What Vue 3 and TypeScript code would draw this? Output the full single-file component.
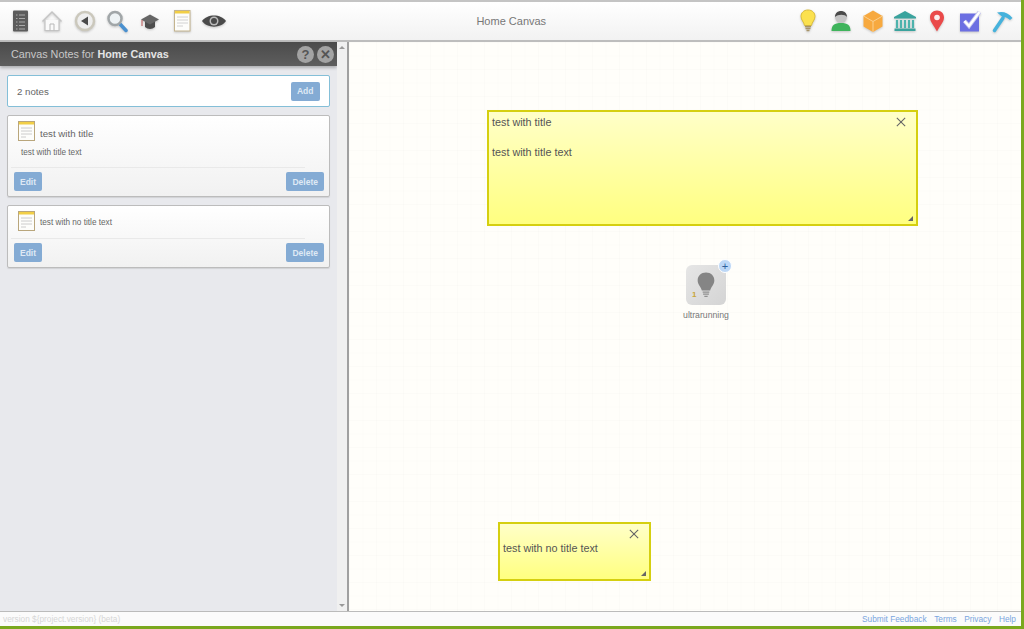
<template>
  <div class="app-shell">
    <header class="topbar">
      <div class="tool-group">
        <svg class="tool" viewBox="0 0 24 24"><rect x="5" y="1.500" width="15" height="21" rx="1" fill="#5c5c5c" /><path d="M8 6h1.500M11 6h6M8 9.500h1.500M11 9.500h6M8 13h1.500M11 13h6M8 16.500h1.500M11 16.500h6M8 20h1.500M11 20h6" stroke="#a8a8a8" stroke-width="1" /></svg>
        <svg class="tool" viewBox="0 0 24 24"><path d="M2.500 12.500 12 3l9.500 9.500" fill="none" stroke="#c4c4c4" stroke-width="1.500" /><path d="M5 11v10.500h14V11" fill="#fafafa" stroke="#c4c4c4" stroke-width="1.200" /><path d="M10 21.500V15h4v6.500" fill="none" stroke="#b8b8b8" /></svg>
        <svg class="tool" viewBox="0 0 24 24"><circle cx="12" cy="12" r="9" fill="#eee" stroke="#cbc8bc" stroke-width="2.500" /><path d="M15 7.500v9L8 12z" fill="#4a4a4a" /></svg>
        <svg class="tool" viewBox="0 0 24 24"><path d="m15 15 6 6.500" stroke="#4a90cf" stroke-width="3.500" stroke-linecap="round" /><circle cx="10" cy="9.500" r="6.500" fill="#eef3f5" stroke="#a1a6a8" stroke-width="2.500" /></svg>
        <svg class="tool" viewBox="0 0 24 24"><path d="M7 12v6c3 2.500 7 2.500 10 0v-6z" fill="#4d4d4d" /><path d="m3 10.500 9-5 9 5-9 5z" fill="#666" /><path d="M4 11v6" stroke="#b55" stroke-width="1" /></svg>
        <svg class="tool" viewBox="0 0 24 24"><rect x="4.500" y="1.500" width="15.500" height="20.500" fill="#fdfdfb" stroke="#c4b48e" /><rect x="5" y="2" width="14.500" height="2.500" fill="#f2cf46" /><path d="M7 8h11M7 11h11M7 14h11M7 17h6" stroke="#d2d2d2" /></svg>
        <svg class="tool" viewBox="0 0 24 24"><path d="M0 12c5-7.500 19-7.500 24 0-5 7.500-19 7.500-24 0z" fill="#4a4a4a" /><circle cx="12" cy="12" r="4.500" fill="#bbb" /><circle cx="12" cy="12" r="3" fill="#4a4a4a" /></svg>
      </div>
      <div class="canvas-name">Home Canvas</div>
      <div class="tool-group tool-group-right">
        <svg class="tool" viewBox="0 0 24 24"><path d="M12 1c-4.500 0-7 3-7 6.500 0 3.500 3 5.500 3.500 9h7C16 13 19 11 19 7.500 19 4 16.500 1 12 1z" fill="#fbe14f" stroke="#d8bb3a" /><path d="M9 17.500h6M9.500 19.500h5M10.500 21.500h3" stroke="#a89468" stroke-width="1.500" /></svg>
        <svg class="tool" viewBox="0 0 24 24"><path d="M2.500 22c0-6 3-8 9.500-8s9.500 2 9.500 8z" fill="#3fb45c" /><circle cx="12" cy="8" r="6" fill="#c4c4c4" /><path d="M6 8c0-8 12-8 12 0-2-3-9-3-12 0z" fill="#4a4a4a" /></svg>
        <svg class="tool" viewBox="0 0 24 24"><path d="m12 1.500 9.500 5.500v10.500L12 23l-9.500-5.500V7z" fill="#f7a93f" /><path d="M2.500 7 12 12.500 21.500 7M12 12.500V23" fill="none" stroke="#fbd08f" stroke-width="1" /></svg>
        <svg class="tool" viewBox="0 0 24 24"><path d="M12 2 1 8v1.500h22V8z" fill="#3aa39d" /><path d="M4 11v8M8 11v8M12 11v8M16 11v8M20 11v8" stroke="#4db3ad" stroke-width="2.200" /><path d="M1.500 19.500h21V22h-21z" fill="#3aa39d" /></svg>
        <svg class="tool" viewBox="0 0 24 24"><path d="M12 1.500c-4.200 0-7 3-7 7 0 4.500 4.500 9 7 14 2.500-5 7-9.500 7-14 0-4-2.800-7-7-7z" fill="#ea4a4a" /><circle cx="12" cy="8.500" r="2.800" fill="#fbeeee" /></svg>
        <svg class="tool" viewBox="0 0 24 24"><rect x="2" y="4.500" width="19" height="18" fill="#6c6fe2" /><path d="m6.500 12 4.500 5L21.500 3" fill="none" stroke="#c6c6ee" stroke-width="4" /><path d="m6.500 12 4.500 5L21.500 3" fill="none" stroke="#fff" stroke-width="2.200" /></svg>
        <svg class="tool" viewBox="0 0 24 24"><path d="M13 9 4.500 21.500" stroke="#46b2dc" stroke-width="3.500" stroke-linecap="round" /><path d="M7 3.500c6-1.500 11 0 15.500 5.500L20 11c-2-2-4.500-3.500-7.500-3z" fill="#46b2dc" /></svg>
      </div>
    </header>

    <div class="workspace">
      <aside class="sidebar">
        <div class="sidebar-main">
          <div class="panel-head">
            <span>Canvas Notes for <b>Home Canvas</b></span>
            <div class="head-btns">
              <span class="round-btn">?</span>
              <span class="round-btn">✕</span>
            </div>
          </div>
          <div class="notes-body">
            <div class="add-box">
              <span>2 notes</span>
              <button class="btn">Add</button>
            </div>
            <div v-for="note in notes" :key="note.id" class="note-card">
              <div class="note-top">
                <svg class="note-icon" viewBox="0 0 17 20"><rect x="0.500" y="0.500" width="16" height="19" fill="#fdfdfb" stroke="#b9a67c" /><rect x="1" y="1" width="15" height="2.500" fill="#f2cf46" /><path d="M3 7h11M3 10h11M3 13h11M3 16h5" stroke="#ccc" /></svg>
                <span :class="note.text ? 'note-title' : 'note-only'">{{ note.title }}</span>
              </div>
              <div v-if="note.text" class="note-text">{{ note.text }}</div>
              <div class="note-divider" :class="{ tight: !note.text }"></div>
              <div class="note-actions">
                <button class="btn">Edit</button>
                <button class="btn">Delete</button>
              </div>
            </div>
          </div>
        </div>
        <div class="scroller">
          <span class="arrow up"></span>
          <span class="arrow down"></span>
        </div>
      </aside>

      <main class="canvas">
        <div class="sticky sticky-large">
          <svg class="sticky-close" viewBox="0 0 12 12"><path d="m1 1 10 10M11 1 1 11" stroke="#666" stroke-width="1.300" /></svg>
          <div>test with title</div>
          <div class="sticky-gap">test with title text</div>
          <span class="grip"></span>
        </div>

        <div class="node">
          <div class="node-tile">
            <svg class="bulb" viewBox="0 0 24 32"><path d="M12 1C6 1 2 5 2 10.500c0 5 4 7.500 5 12h10c1-4.500 5-7 5-12C22 5 18 1 12 1z" fill="#858585" /><path d="M8 24.500h8M8.500 27h7M10 29.500h4" stroke="#909090" stroke-width="1.500" /></svg>
            <span class="node-count">1</span>
            <span class="node-plus">+</span>
          </div>
          <div class="node-label">ultrarunning</div>
        </div>

        <div class="sticky sticky-small">
          <svg class="sticky-close" viewBox="0 0 12 12"><path d="m1 1 10 10M11 1 1 11" stroke="#666" stroke-width="1.300" /></svg>
          <div>test with no title text</div>
          <span class="grip"></span>
        </div>
      </main>
    </div>

    <footer class="footer">
      <span class="version">version ${project.version} (beta)</span>
      <nav class="links">
        <a v-for="link in links" :key="link">{{ link }}</a>
      </nav>
    </footer>
  </div>
</template>

<script setup lang="ts">
interface Note {
  id: number
  title: string
  text: string
}

const notes: Note[] = [
  { id: 1, title: 'test with title', text: 'test with title text' },
  { id: 2, title: 'test with no title text', text: '' },
]

const links = ['Submit Feedback', 'Terms', 'Privacy', 'Help']
</script>

<style>
html,
body {
  margin: 0;
  height: 100%;
  overflow: hidden;
}
</style>

<style scoped>
.app-shell {
  width: 1024px;
  height: 629px;
  box-sizing: border-box;
  display: flex;
  flex-direction: column;
  border-right: 3px solid #7aa81e;
  border-bottom: 3px solid #7aa81e;
  font-family: "Liberation Sans", Arial, sans-serif;
  color: #666;
}

.topbar {
  height: 42px;
  box-sizing: border-box;
  flex: none;
  display: flex;
  align-items: center;
  justify-content: space-between;
  padding: 0 7px 0 8px;
  background: linear-gradient(#fff, #f2f2f2);
  border-top: 2px solid #c4c4c4;
  border-bottom: 2px solid #bdbdbd;
}

.tool-group {
  display: flex;
  gap: 8.400px;
}

.tool-group-right {
  gap: 8.300px;
}

.tool {
  width: 24px;
  height: 24px;
  display: block;
  filter: drop-shadow(0 1px 1px rgba(0, 0, 0, 0.2));
}

.canvas-name {
  font-size: 11px;
  color: #777;
}

.workspace {
  flex: 1;
  min-height: 0;
  display: flex;
}

.sidebar {
  width: 349px;
  box-sizing: border-box;
  flex: none;
  display: flex;
  background: #e8e9ed;
  border-right: 2px solid #a0a0a0;
}

.sidebar-main {
  width: 337px;
  flex: none;
}

.panel-head {
  height: 24px;
  display: flex;
  align-items: center;
  justify-content: space-between;
  padding: 0 3px 0 11px;
  background: linear-gradient(#4b4b4b, #5e5e5e);
  box-shadow: 0 2px 3px rgba(0, 0, 0, 0.25);
  color: #c8c8c8;
  font-size: 10.800px;
}

.panel-head b {
  color: #e4e4e4;
}

.head-btns {
  display: flex;
  gap: 3px;
}

.round-btn {
  width: 17px;
  height: 17px;
  border-radius: 50%;
  background: #a3a3a3;
  color: #555;
  font-size: 13px;
  font-weight: bold;
  line-height: 17px;
  text-align: center;
}

.notes-body {
  display: flex;
  flex-direction: column;
  gap: 8px;
  padding: 9px 7px 0;
}

.add-box {
  height: 32px;
  box-sizing: border-box;
  display: flex;
  align-items: center;
  justify-content: space-between;
  padding: 0 9.500px 0 9px;
  background: #fff;
  border: 1.500px solid #84bfd8;
  border-radius: 2px;
  font-size: 9.700px;
  color: #666;
}

.btn {
  height: 19px;
  padding: 0 6px;
  border: 0;
  border-radius: 2px;
  background: #84abd4;
  color: #dfe9f4;
  font-family: inherit;
  font-size: 8.500px;
  font-weight: bold;
}

.note-card {
  box-sizing: border-box;
  background: linear-gradient(#fff, #f1f1f1);
  border: 1px solid #bcbcbc;
  border-radius: 2px;
  padding: 5px 5px 5px 6px;
  box-shadow: 0 1px 1px rgba(0, 0, 0, 0.1);
}

.note-top {
  display: flex;
  align-items: center;
  gap: 5px;
  padding-left: 4px;
}

.note-icon {
  width: 17px;
  height: 20px;
  flex: none;
}

.note-title {
  font-size: 9.700px;
  color: #666;
  margin-top: 4px;
}

.note-only,
.note-text {
  font-size: 8.200px;
  color: #666;
}

.note-only {
  margin-top: 2px;
}

.note-text {
  margin: 7px 0 0 7px;
}

.note-divider {
  height: 1px;
  margin: 10px 19px 4px -3px;
  background: #e9e9e9;
}

.note-divider.tight {
  margin-top: 7px;
}

.note-actions {
  display: flex;
  justify-content: space-between;
}

.scroller {
  flex: 1;
  display: flex;
  flex-direction: column;
  justify-content: space-between;
  align-items: center;
  padding: 4px 0;
  background: #f0f0f0;
}

.arrow {
  width: 0;
  height: 0;
  border-left: 3px solid transparent;
  border-right: 3px solid transparent;
}

.arrow.up {
  border-bottom: 3px solid #999;
}

.arrow.down {
  border-top: 3px solid #999;
}

.canvas {
  position: relative;
  flex: 1;
  background-color: #fffefa;
  background-image:
    linear-gradient(rgba(0, 0, 0, 0.01) 1px, transparent 1px),
    linear-gradient(90deg, rgba(0, 0, 0, 0.01) 1px, transparent 1px);
  background-size: 13.500px 13.500px;
}

.sticky {
  position: absolute;
  box-sizing: border-box;
  padding: 2px 3px;
  background: linear-gradient(#ffffc8, #ffff80);
  border: 2px solid #d5cf10;
  color: #555;
  font-size: 10.800px;
  line-height: 16px;
}

.sticky-large {
  left: 138px;
  top: 68px;
  width: 431px;
  height: 116px;
}

.sticky-small {
  left: 149px;
  top: 480px;
  width: 153px;
  height: 59px;
  padding-top: 16px;
}

.sticky-gap {
  margin-top: 14px;
}

.sticky-close {
  position: absolute;
  top: 5px;
  right: 10px;
  width: 10px;
  height: 10px;
}

.grip {
  position: absolute;
  right: 3px;
  bottom: 3px;
  width: 0;
  height: 0;
  border-left: 5px solid transparent;
  border-bottom: 5px solid #666;
}

.node {
  position: absolute;
  left: 322px;
  top: 223px;
  width: 70px;
  display: flex;
  flex-direction: column;
  align-items: center;
}

.node-tile {
  position: relative;
  width: 40px;
  height: 40px;
  border-radius: 6px;
  background: linear-gradient(135deg, #e6e6e6, #d4d4d4);
  display: flex;
  align-items: center;
  justify-content: center;
}

.bulb {
  width: 20px;
  height: 28px;
}

.node-count {
  position: absolute;
  left: 6px;
  bottom: 6px;
  font-size: 8px;
  font-weight: bold;
  color: #c9a53a;
}

.node-plus {
  position: absolute;
  top: -6px;
  right: -6px;
  width: 12px;
  height: 12px;
  border-radius: 50%;
  background: #bcd7f6;
  border: 1px solid #fff;
  color: #2d5f9c;
  font-size: 11px;
  line-height: 12px;
  text-align: center;
}

.node-label {
  margin-top: 5px;
  font-size: 8.700px;
  color: #777;
}

.footer {
  height: 15px;
  box-sizing: border-box;
  flex: none;
  display: flex;
  align-items: center;
  justify-content: space-between;
  padding: 0 5px 0 3px;
  background: #fbfbfb;
  border-top: 1px solid #bbb;
  font-size: 8.300px;
}

.version {
  color: #d6d6d6;
}

.links {
  display: flex;
  gap: 7.500px;
  color: #7aa6e0;
}
</style>
